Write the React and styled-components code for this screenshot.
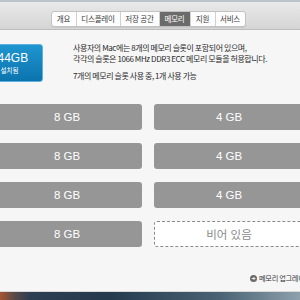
import React from "react";
import styled, { createGlobalStyle } from "styled-components";

const Global = createGlobalStyle`
  html, body { margin: 0; padding: 0; }
  body { width: 300px; height: 300px; overflow: hidden; font-family: "Noto Sans CJK KR", "Noto Sans", sans-serif; }
`;

const Page = styled.div`
  width: 300px;
  height: 300px;
  overflow: hidden;
  display: flex;
  flex-direction: column;
  background: linear-gradient(90deg, #a9542f 0px, #5a4a48 14px, #2c3e52 30px, #263a4e 110px, #4a6274 220px, #8ea0ac 300px);
`;

const Window = styled.div`
  height: 291px;
  flex: none;
  display: flex;
  flex-direction: column;
  background: #f6f6f6;
  border-bottom: 1px solid #d9d9d9;
`;

const Toolbar = styled.div`
  flex: none;
  height: 30px;
  box-sizing: border-box;
  border-top: 2px solid #b9c4cc;
  background: linear-gradient(#e9e9e9, #d5d5d5);
  border-bottom: 1px solid #bdbdbd;
  display: flex;
  justify-content: center;
  align-items: center;
  padding-right: 4px;
  padding-top: 6px;
`;

const Tabs = styled.div`
  display: flex;
  height: 14px;
  border: 1px solid #c2c2c2;
  border-radius: 3px;
  background: #fdfdfd;
  overflow: hidden;
  box-shadow: 0 1px 0 rgba(0,0,0,0.06);
`;

const Tab = styled.div`
  height: 100%;
  width: ${(p) => p.$w}px;
  display: flex;
  align-items: center;
  justify-content: center;
  font-size: 7.5px;
  letter-spacing: -0.2px;
  color: ${(p) => (p.$active ? "#ffffff" : "#3a3a3a")};
  background: ${(p) => (p.$active ? "#6b6b6b" : "transparent")};
  border-left: ${(p) => (p.$first ? "none" : "1px solid #d0d0d0")};
  box-sizing: border-box;
`;

const Content = styled.div`
  flex: 1;
  display: flex;
  flex-direction: column;
  padding-top: 14px;
`;

const Summary = styled.div`
  display: flex;
  align-items: flex-start;
  gap: 30px;
`;

const Installed = styled.div`
  margin-left: -24px;
  width: 67px;
  height: 38px;
  box-sizing: border-box;
  border-radius: 3px;
  border: 1px solid #5fb0dc;
  background: linear-gradient(#1f95cf, #0b74ae);
  color: #fff;
  display: flex;
  flex-direction: column;
  align-items: center;
  justify-content: center;
  padding-top: 1px;
`;

const Size = styled.div`
  font-family: "Liberation Sans", "Noto Sans", sans-serif;
  font-size: 12px;
  line-height: 13px;
`;

const SizeLabel = styled.div`
  font-size: 6.5px;
  line-height: 10px;
`;

const Desc = styled.div`
  margin-top: -2px;
  font-size: 8px;
  letter-spacing: -0.42px;
  line-height: 11px;
  color: #2b2b2b;
  white-space: nowrap;
`;

const Para = styled.p`
  margin: 0 0 ${(p) => p.$gap || 0}px 0;
`;

const Slots = styled.div`
  margin-top: 22px;
  margin-left: -8px;
  width: 312px;
  display: grid;
  grid-template-columns: 150px 150px;
  column-gap: 12px;
  row-gap: 13px;
`;

const Slot = styled.div`
  height: 26px;
  box-sizing: border-box;
  border-radius: 3px;
  display: flex;
  align-items: center;
  justify-content: center;
  font-family: "Liberation Sans", "Noto Sans CJK KR", sans-serif;
  font-size: 11.5px;
  background: ${(p) => (p.$empty ? "#ffffff" : "#969696")};
  color: ${(p) => (p.$empty ? "#8a8a8a" : "#ffffff")};
  border: ${(p) => (p.$empty ? "1px dashed #8a8a8a" : "none")};
`;

const Footer = styled.div`
  margin-top: 26px;
  padding-left: 250px;
  display: flex;
  align-items: center;
  gap: 2px;
  white-space: nowrap;
  font-size: 7.2px;
  letter-spacing: -0.3px;
  color: #333;
`;

const ArrowSvg = styled.svg`
  flex: none;
  display: block;
`;

const Arrow = () => (
  <ArrowSvg width="7" height="7" viewBox="0 0 14 14">
    <circle cx="7" cy="7" r="7" fill="#6a6a6a" />
    <path d="M3.5 7h6M7 4l3 3-3 3" stroke="#fff" strokeWidth="1.8" fill="none" />
  </ArrowSvg>
);

const tabs = [
  ["개요", 24],
  ["디스플레이", 44],
  ["저장 공간", 39],
  ["메모리", 31],
  ["지원", 25],
  ["서비스", 30],
];

const slots = ["8 GB", "4 GB", "8 GB", "4 GB", "8 GB", "4 GB", "8 GB", null];

export default function App() {
  return (
    <>
      <Global />
      <Page>
        <Window>
          <Toolbar>
            <Tabs>
              {tabs.map(([t, w], i) => (
                <Tab key={t} $w={w} $first={i === 0} $active={t === "메모리"}>
                  {t}
                </Tab>
              ))}
            </Tabs>
          </Toolbar>
          <Content>
            <Summary>
              <Installed>
                <Size>144GB</Size>
                <SizeLabel>설치됨</SizeLabel>
              </Installed>
              <Desc>
                <Para>사용자의 Mac에는 8개의 메모리 슬롯이 포함되어 있으며,</Para>
                <Para $gap={6}>각각의 슬롯은 1066 MHz DDR3 ECC 메모리 모듈을 허용합니다.</Para>
                <Para>7개의 메모리 슬롯 사용 중, 1개 사용 가능</Para>
              </Desc>
            </Summary>
            <Slots>
              {slots.map((s, i) =>
                s ? <Slot key={i}>{s}</Slot> : <Slot key={i} $empty>비어 있음</Slot>
              )}
            </Slots>
            <Footer>
              <Arrow />
              <span>메모리 업그레이드 설명</span>
            </Footer>
          </Content>
        </Window>
      </Page>
    </>
  );
}
